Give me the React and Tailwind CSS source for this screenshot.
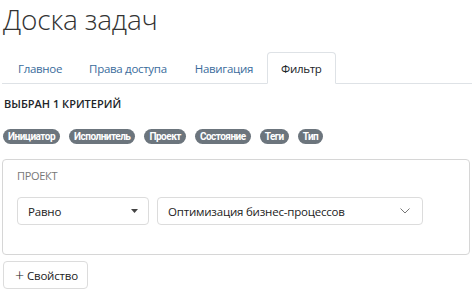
import React from "react";

const font = { fontFamily: '"Open Sans", "Noto Sans", sans-serif' };
const pillFont = { fontFamily: 'Roboto, "Noto Sans", sans-serif' };

function Pill({ children, className = "" }) {
  return (
    <span
      className={"inline-flex h-[15px] items-center rounded-full bg-[#6c757d] px-[5px] text-[10px] font-bold leading-none tracking-[-0.5px] text-white " + className}
      style={pillFont}
    >
      {children}
    </span>
  );
}

export default function App() {
  return (
    <div className="h-[291px] w-[472px] overflow-hidden bg-white text-[#212529]" style={font}>
      <h1 className="pl-[3px] pt-[1px] text-[28px] font-light leading-[36px] tracking-[-0.2px] text-[#333]">Доска задач</h1>
      <div className="ml-[2px] mt-[15px] flex border-b border-[#dee2e6] pl-[3px] text-[11.5px] tracking-[-0.3px]">
        <a className="px-[13px] pb-[6px] pt-[8px] text-[#3a6c9c]">Главное</a>
        <a className="px-[14px] pb-[6px] pt-[8px] text-[#3a6c9c]">Права доступа</a>
        <a className="px-[14px] pb-[6px] pt-[8px] text-[#3a6c9c]">Навигация</a>
        <a className="-mb-px rounded-t-[4px] border border-b-white border-[#dee2e6] px-[13px] pb-[6px] pt-[7px] text-[#212529]">Фильтр</a>
      </div>
      <div className="pl-[4px] pt-[12px] text-[11px] font-semibold leading-[16px] text-[#212529]">ВЫБРАН 1 КРИТЕРИЙ</div>
      <div className="mt-[17px] flex gap-[9px] pl-[3px]">
        <Pill>Инициатор</Pill>
        <Pill>Исполнитель</Pill>
        <Pill>Проект</Pill>
        <Pill>Состояние</Pill>
        <Pill>Теги</Pill>
        <Pill>Тип</Pill>
      </div>
      <div className="mx-[2px] mt-[15px] h-[96px] rounded-[4px] border border-[#d6d6d6] px-[14px] pt-[8px]">
        <div className="text-[11px] leading-[16px] tracking-[-0.3px] text-[#777]">ПРОЕКТ</div>
        <div className="mt-[13px] flex gap-[8px] text-[11.5px] tracking-[-0.2px]">
          <div className="flex h-[28px] w-[132px] items-center justify-between rounded-[4px] border border-[#dcdcdc] pl-[10px] pr-[10px] text-[#222]">
            <span>Равно</span>
            <svg width="7" height="4" viewBox="0 0 7 4"><path d="M0 0h7L3.5 4z" fill="#444" /></svg>
          </div>
          <div className="flex h-[28px] w-[266px] items-center justify-between rounded-[4px] border border-[#dcdcdc] pl-[10px] pr-[12px] text-[#222]">
            <span>Оптимизация бизнес-процессов</span>
            <svg width="10" height="6" viewBox="0 0 10 6"><path d="M0.5 0.5L5 5L9.5 0.5" stroke="#777" strokeWidth="1" fill="none" /></svg>
          </div>
        </div>
      </div>
      <div className="mt-[6px] pl-[3px]">
        <button className="flex h-[28px] w-[85px] items-center gap-[3px] rounded-[4px] border border-[#dcdcdc] pl-[11px] text-[11.5px] tracking-[-0.2px] text-[#222]">
          <span className="text-[16px] font-light leading-none">+</span>
          <span>Свойство</span>
        </button>
      </div>
    </div>
  );
}
